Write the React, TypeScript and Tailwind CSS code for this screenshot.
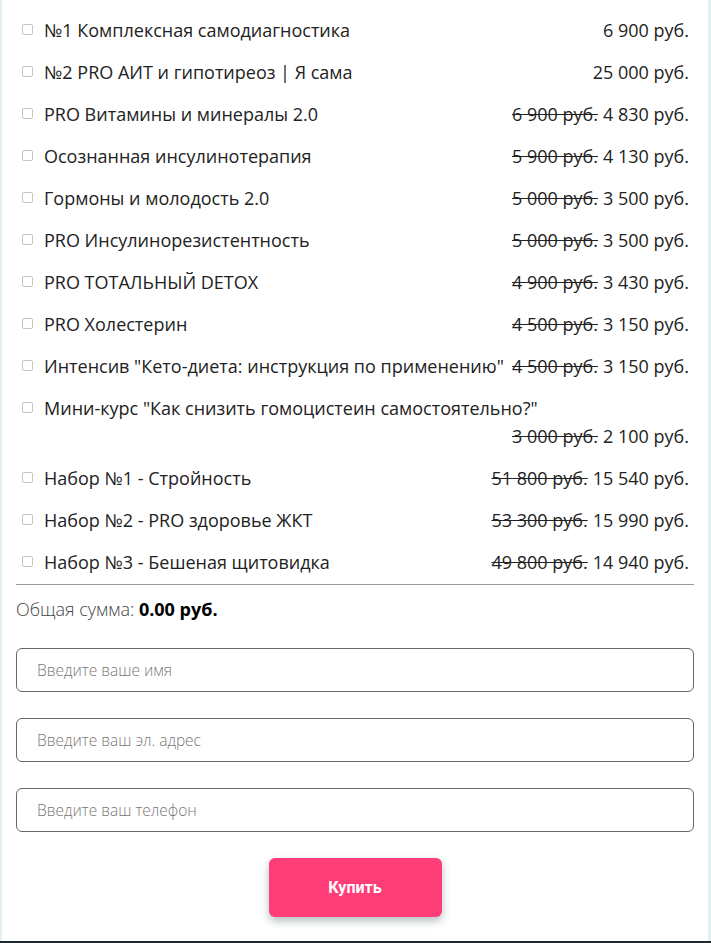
import React from "react";

type Item = { title: string; oldPrice?: string; price: string };

const items: Item[] = [
  { title: "№1 Комплексная самодиагностика", price: "6 900 руб." },
  { title: "№2 PRO АИТ и гипотиреоз | Я сама", price: "25 000 руб." },
  { title: "PRO Витамины и минералы 2.0", oldPrice: "6 900 руб.", price: "4 830 руб." },
  { title: "Осознанная инсулинотерапия", oldPrice: "5 900 руб.", price: "4 130 руб." },
  { title: "Гормоны и молодость 2.0", oldPrice: "5 000 руб.", price: "3 500 руб." },
  { title: "PRO Инсулинорезистентность", oldPrice: "5 000 руб.", price: "3 500 руб." },
  { title: "PRO ТОТАЛЬНЫЙ DETOX", oldPrice: "4 900 руб.", price: "3 430 руб." },
  { title: "PRO Холестерин", oldPrice: "4 500 руб.", price: "3 150 руб." },
  {
    title: 'Интенсив "Кето-диета: инструкция по применению"',
    oldPrice: "4 500 руб.",
    price: "3 150 руб.",
  },
  {
    title: 'Мини-курс "Как снизить гомоцистеин самостоятельно?"',
    oldPrice: "3 000 руб.",
    price: "2 100 руб.",
  },
  { title: "Набор №1 - Стройность", oldPrice: "51 800 руб.", price: "15 540 руб." },
  { title: "Набор №2 - PRO здоровье ЖКТ", oldPrice: "53 300 руб.", price: "15 990 руб." },
  { title: "Набор №3 - Бешеная щитовидка", oldPrice: "49 800 руб.", price: "14 940 руб." },
];

function ProductRow({ item }: { item: Item }) {
  return (
    <label className="flex items-start pr-[5px] cursor-pointer">
      <span className="mt-[8px] ml-[6px] mr-[11px] h-[11px] w-[11px] shrink-0 rounded-[2px] border border-[#c4c4c4] bg-white" />
      <div className="flex flex-1 flex-wrap justify-between leading-[28px]">
        <span>{item.title}</span>
        <span className="ml-auto whitespace-nowrap">
          {item.oldPrice && <s className="mr-[5px]">{item.oldPrice}</s>}
          {item.price}
        </span>
      </div>
    </label>
  );
}

export default function App() {
  const fields = ["Введите ваше имя", "Введите ваш эл. адрес", "Введите ваш телефон"];

  return (
    <div className="flex min-h-[943px] flex-col bg-white font-['Open_Sans',sans-serif]">
      <div className="flex-1 border-x-2 border-[#e3f1f2] border-r-[3px] px-[14px] pt-[16px] pb-[24px] text-[18px] text-[#222]">
        <div className="flex flex-col gap-[14px]">
          {items.map((item) => (
            <ProductRow key={item.title} item={item} />
          ))}
        </div>

        <hr className="mt-[8px] border-t border-[#9a9a9a]" />

        <p className="mt-[10px] leading-[28px] font-light text-[#444]">
          Общая сумма: <b className="font-bold text-black">0.00 руб.</b>
        </p>

        <form className="mt-[25px] flex flex-col gap-[26px]">
          {fields.map((f) => (
            <input
              key={f}
              type="text"
              placeholder={f}
              className="h-[44px] w-full rounded-[6px] border border-[#666] px-[20px] text-[15.5px] font-light text-[#333] outline-none placeholder:text-[#777]"
            />
          ))}
          <div className="flex justify-center">
            <button
              type="button"
              className="h-[59px] w-[173px] rounded-[6px] bg-[#ff3d78] font-['Roboto',sans-serif] text-[16px] font-bold text-white shadow-[0_4px_8px_rgba(0,40,50,0.3)]"
            >
              Купить
            </button>
          </div>
        </form>
      </div>
      <div className="h-[2px] bg-[#1c2a2e]" />
    </div>
  );
}
